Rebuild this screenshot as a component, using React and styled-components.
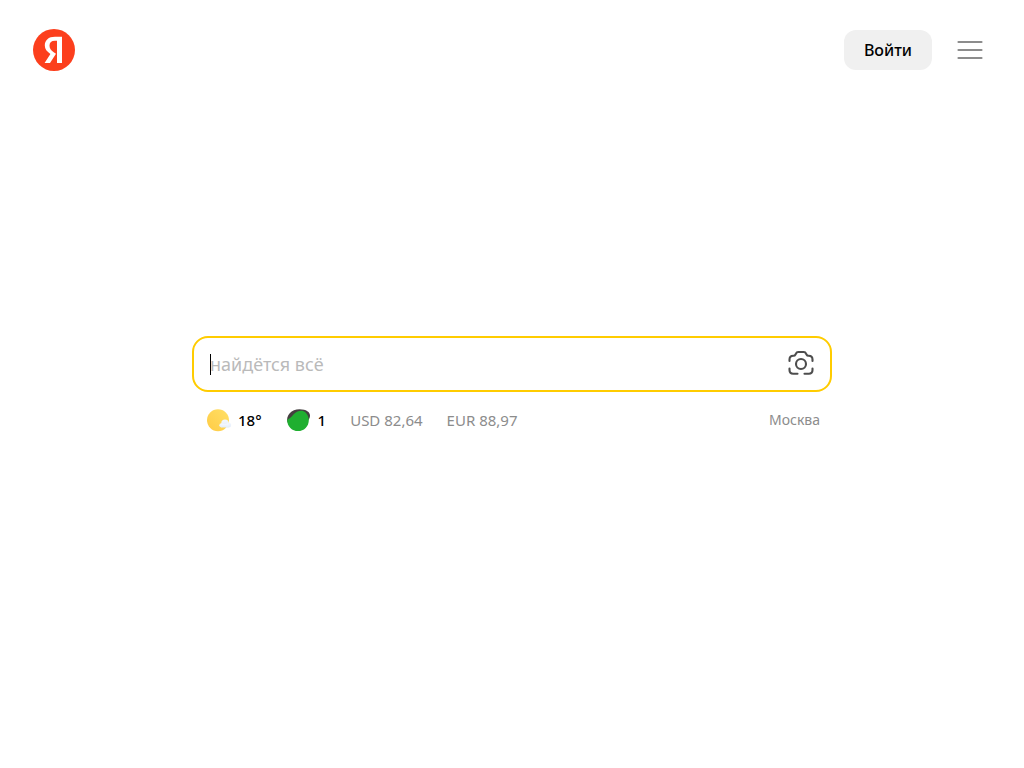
import React from 'react'
import styled, { createGlobalStyle } from 'styled-components'

const GlobalStyle = createGlobalStyle`
  * {
    box-sizing: border-box;
  }
  body {
    margin: 0;
    background-color: #fff;
    color: #000;
    font-family: 'Noto Sans', 'Open Sans', sans-serif;
  }
`;

const Page = styled.div`
  min-height: 100vh;
  display: flex;
  flex-direction: column;
`;

const Header = styled.header`
  display: flex;
  align-items: center;
  justify-content: space-between;
  padding: 28px 40px 28px 32px;
`;

const LogoLink = styled.a`
  display: flex;
`;

const HeaderActions = styled.div`
  display: flex;
  align-items: center;
  gap: 24px;
`;

const LoginButton = styled.button`
  height: 40px;
  padding: 0 20px;
  border: none;
  border-radius: 12px;
  background-color: #f0f0f0;
  color: #000;
  font-family: inherit;
  font-size: 16px;
  font-weight: 500;
  line-height: 20px;
  cursor: pointer;
`;

const IconButton = styled.button`
  display: flex;
  padding: 0;
  border: none;
  background: none;
  color: ${({ $color }) => $color};
  cursor: pointer;
`;

const Main = styled.main`
  flex: 1;
  display: flex;
  flex-direction: column;
  justify-content: center;
  width: 100%;
  max-width: 640px;
  margin: 0 auto;
  padding-bottom: 84px;
`;

const SearchForm = styled.form`
  display: flex;
  align-items: center;
  height: 56px;
  padding: 0 15px 0 16px;
  border: 2px solid #fc0;
  border-radius: 16px;
`;

const InputWrap = styled.div`
  position: relative;
  flex: 1;
  display: flex;
`;

const SearchInput = styled.input`
  width: 100%;
  padding: 0;
  border: none;
  outline: none;
  background: none;
  font-family: inherit;
  font-size: 18px;
  line-height: 24px;
  caret-color: transparent;

  &::placeholder {
    color: #bababa;
    opacity: 1;
  }
`;

const Caret = styled.span`
  position: absolute;
  top: 2px;
  left: 0;
  width: 1px;
  height: 21px;
  background-color: #000;
`;

const Informers = styled.div`
  display: flex;
  align-items: center;
  gap: 24px;
  padding: 16px 12px 16px 14px;
`;

const Informer = styled.a`
  display: flex;
  align-items: center;
  gap: 8px;
  color: ${({ $strong }) => ($strong ? '#000' : '#8c8c8c')};
  font-size: 15px;
  font-weight: ${({ $strong }) => ($strong ? 500 : 400)};
  line-height: 24px;
  text-decoration: none;
`;

const City = styled(Informer)`
  margin-left: auto;
  font-size: 14px;
`;

const InformerIcon = styled.svg`
  overflow: visible;
`;

function Logo() {
  return (
    <svg width="44" height="44" viewBox="0 0 44 44" aria-hidden="true">
      <circle cx="22" cy="22" r="21" fill="#fc3f1d" />
      <path
        d="M25 12.800H23c-3.700 0-5.500 1.900-5.500 4.800 0 3.200 1.400 4.700 4.200 6.600l2.300 1.600-6 9.300h-5.400l5.800-9c-3.500-2.500-5.600-4.900-5.600-8.500C12.800 12.200 16.500 8.800 23 8.800h7v26.300h-5z"
        fill="#fff"
      />
    </svg>
  )
}

function MenuIcon() {
  return (
    <svg width="28" height="28" viewBox="0 0 28 28" aria-hidden="true">
      <path d="M2.500 6H25.500M2.500 14H25.500M2.500 22H25.500" stroke="currentColor" strokeWidth="2.200" strokeLinecap="round" />
    </svg>
  )
}

function CameraIcon() {
  return (
    <svg width="28" height="28" viewBox="0 0 28 28" fill="none" stroke="currentColor" strokeWidth="2.100" strokeLinecap="round" aria-hidden="true">
      <circle cx="14" cy="14" r="5" />
      <path d="M2.500 11V9.500C2.500 7.200 4 5.800 6.200 5.800h.6c.7 0 1.200-.4 1.500-1L8.900 3.700C9.400 2.600 10 2 11.200 2h5.600c1.200 0 1.800.6 2.300 1.700l.6 1.100c.3.6.8 1 1.500 1h.6c2.200 0 3.700 1.400 3.700 3.700V11" />
      <path d="M2.500 18.500V20c0 2.500 1.300 3.700 3.700 3.700H10.500" />
      <path d="M25.500 18.500V20c0 2.500-1.300 3.700-3.700 3.700H17.500" />
    </svg>
  )
}

function WeatherIcon() {
  return (
    <InformerIcon width="24" height="24" viewBox="0 0 24 24" aria-hidden="true">
      <defs>
        <linearGradient id="sun" x1="0" y1="1" x2="1" y2="0">
          <stop offset="0" stopColor="#ffcb45" />
          <stop offset="1" stopColor="#ffe066" />
        </linearGradient>
        <linearGradient id="cloud" x1="0" y1="0" x2="0" y2="1">
          <stop offset="0" stopColor="#f4f8ff" />
          <stop offset="1" stopColor="#e3edfa" />
        </linearGradient>
      </defs>
      <circle cx="12" cy="12.300" r="11" fill="url(#sun)" />
      <g fill="url(#cloud)">
        <circle cx="19" cy="15.300" r="3.700" />
        <circle cx="15.400" cy="17.300" r="2.100" />
        <circle cx="22.600" cy="17" r="2.500" />
        <rect x="15.400" y="16" width="7.200" height="3.500" />
      </g>
    </InformerIcon>
  )
}

function TrafficIcon() {
  return (
    <InformerIcon width="24" height="24" viewBox="0 0 24 24" aria-hidden="true">
      <path d="M1.500 14.500C-.5 7.500 5.500 1.200 13.500 1.200 20.300 1.200 24.200 4 24 7.800c-.1 2.600-1.300 4.200-3 5.700z" fill="#454040" />
      <path d="M1.200 12.300C1.800 11 3 10.700 4 9.900 6.900 7.500 8.300 4.700 11.500 3.400 14 2.300 17.500 2.200 19.600 4.400 21.700 6.400 22.800 9.400 22.800 12.300A10.800 10.800 0 0 1 12 23.100 10.800 10.800 0 0 1 1.200 12.300z" fill="#1faf30" />
    </InformerIcon>
  )
}

function App() {

  const rates = [
    { name: 'USD', value: '82,64' },
    { name: 'EUR', value: '88,97' },
  ]

  return (
    <>
      <GlobalStyle />
      <Page>
        <Header>
          <LogoLink href="#" aria-label="Яндекс">
            <Logo />
          </LogoLink>
          <HeaderActions>
            <LoginButton type="button">Войти</LoginButton>
            <IconButton type="button" $color="#8c8c8c" aria-label="Меню">
              <MenuIcon />
            </IconButton>
          </HeaderActions>
        </Header>

        <Main>
          <SearchForm role="search" onSubmit={(e) => e.preventDefault()}>
            <InputWrap>
              <SearchInput type="text" name="text" placeholder="найдётся всё" aria-label="Запрос" autoComplete="off" />
              <Caret />
            </InputWrap>
            <IconButton type="button" $color="#4d4d4d" aria-label="Поиск по картинке">
              <CameraIcon />
            </IconButton>
          </SearchForm>

          <Informers>
            <Informer href="#" $strong>
              <WeatherIcon />
              18°
            </Informer>
            <Informer href="#" $strong>
              <TrafficIcon />
              1
            </Informer>
            {rates.map((rate) => (
              <Informer href="#" key={rate.name}>
                {rate.name} {rate.value}
              </Informer>
            ))}
            <City href="#">Москва</City>
          </Informers>
        </Main>
      </Page>
    </>
  )
}

export default App
